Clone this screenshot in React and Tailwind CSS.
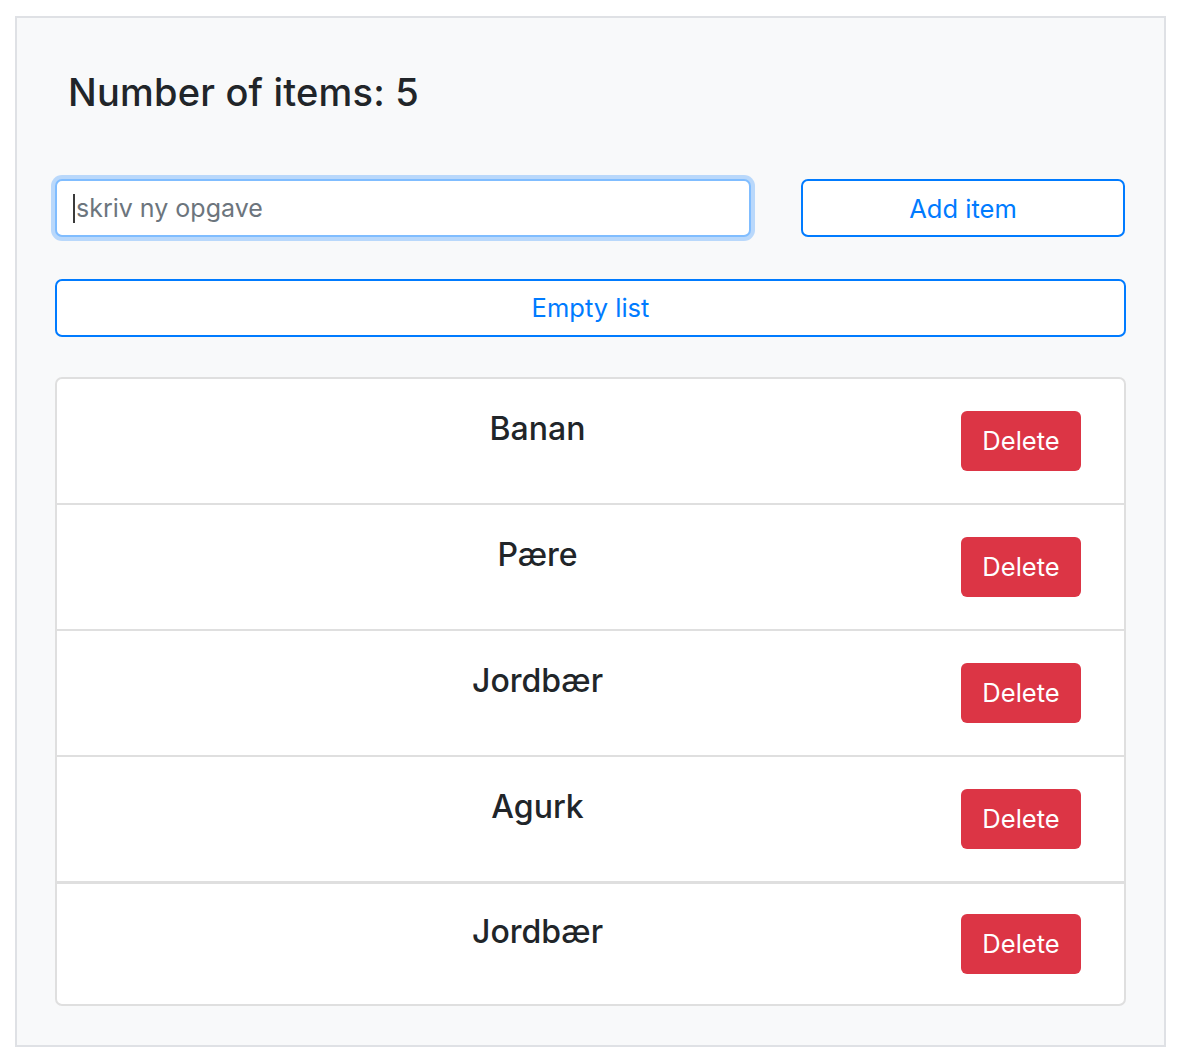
import { useState } from 'react';

const startItems = ['Banan', 'Pære', 'Jordbær', 'Agurk', 'Jordbær'];

export default function App() {
  const [items, setItems] = useState(startItems);
  const [text, setText] = useState('');

  const addItem = () => {
    if (!text.trim()) return;
    setItems([...items, text.trim()]);
    setText('');
  };

  return (
    <div className="min-h-screen bg-white pt-[16px] pl-[15px] font-['Inter','Noto_Sans',sans-serif] text-[#212529]">
      <div className="w-[1151px] h-[1031px] border-2 border-[#dfe1e5] bg-[#f8f9fa] px-[38px]">
        <h2 className="pt-[50px] pl-[13px] text-[38px] leading-[48px] font-medium tracking-[0.2px]">
          Number of items: {items.length}
        </h2>

        <div className="mt-[63px] flex gap-[50px]">
          <div className="relative w-[696px]">
            <input
              value={text}
              onChange={(e) => setText(e.target.value)}
              placeholder="skriv ny opgave"
              className="w-full h-[58px] rounded-[7px] border-2 border-[#80bdff] bg-white pl-[19px] text-[25px] text-[#495057] placeholder:text-[#6c757d] outline-none shadow-[0_0_0_4px_#b9d8fb]"
            />
            <span className="absolute left-[18px] top-[15px] h-[29px] w-[2px] bg-[#3a3a3a]" />
          </div>
          <button
            onClick={addItem}
            className="w-[324px] h-[58px] rounded-[7px] border-2 border-[#007bff] bg-white pt-[3px] text-[25.5px] text-[#007bff]"
          >
            Add item
          </button>
        </div>

        <button
          onClick={() => setItems([])}
          className="mt-[42px] w-full h-[58px] rounded-[7px] border-2 border-[#007bff] bg-white text-[25.5px] text-[#007bff]"
        >
          Empty list
        </button>

        <ul className="mt-[40px] rounded-[7px] border-2 border-[#dfdfdf] bg-white">
          {items.map((item, i) => (
            <li
              key={i}
              className={
                'flex items-start pr-[43px] ' +
                (i === items.length - 1
                  ? 'pt-[30px] pb-[30px]'
                  : i === 3
                  ? 'py-8 border-b-[3px] border-[#dfdfdf]'
                  : 'py-8 border-b-2 border-[#dfdfdf]')
              }
            >
              <div className="flex-1 pl-[57px] text-center text-[32px] leading-9 font-medium">
                {item}
              </div>
              <button
                onClick={() => setItems(items.filter((_, j) => j !== i))}
                className="w-[120px] h-[60px] rounded-[6px] bg-[#dc3545] text-[25.5px] text-white"
              >
                Delete
              </button>
            </li>
          ))}
        </ul>
      </div>
    </div>
  );
}
